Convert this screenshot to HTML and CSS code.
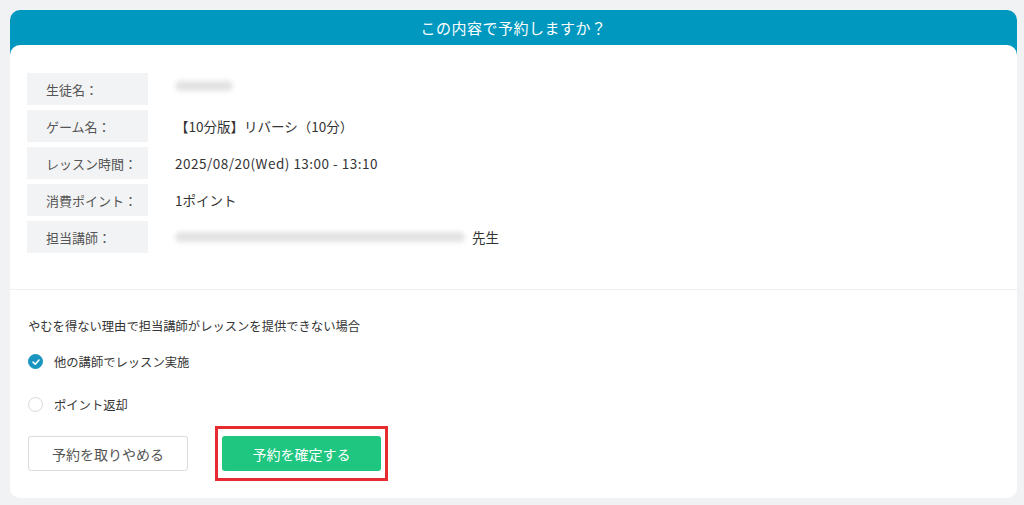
FILE: index.html
```html
<!DOCTYPE html>
<html lang="ja">
<head>
<meta charset="UTF-8" />
<meta name="viewport" content="width=device-width, initial-scale=1" />
<title>予約確認</title>
<link rel="stylesheet" href="styles.css">
</head>
<body>
  <div class="dialog">
    <div class="dialog-head">この内容で予約しますか？</div>
    <div class="dialog-body">
      <div class="details">
        <div class="row">
          <div class="label">生徒名：</div>
          <div class="value"><span class="blur blur-short"></span></div>
        </div>
        <div class="row">
          <div class="label">ゲーム名：</div>
          <div class="value">【10分版】リバーシ（10分）</div>
        </div>
        <div class="row">
          <div class="label">レッスン時間：</div>
          <div class="value num">2025/08/20(Wed) 13:00 - 13:10</div>
        </div>
        <div class="row">
          <div class="label">消費ポイント：</div>
          <div class="value">1ポイント</div>
        </div>
        <div class="row">
          <div class="label">担当講師：</div>
          <div class="value"><span class="blur blur-long"></span>先生</div>
        </div>
      </div>

      <div class="options">
        <p class="note">やむを得ない理由で担当講師がレッスンを提供できない場合</p>
        <label class="radio">
          <span class="radio-mark checked">
            <svg width="10" height="10" viewBox="0 0 10 10"><path d="M2 5.2 L4.2 7.2 L8 3" fill="none" stroke="#fff" stroke-width="1.6" stroke-linecap="round" stroke-linejoin="round"/></svg>
          </span>
          他の講師でレッスン実施
        </label>
        <label class="radio">
          <span class="radio-mark"></span>
          ポイント返却
        </label>
        <div class="actions">
          <button class="btn btn-cancel">予約を取りやめる</button>
          <span class="highlight">
            <button class="btn btn-confirm">予約を確定する</button>
          </span>
        </div>
      </div>
    </div>
  </div>
</body>
</html>
```

FILE: styles.css
```css
/* Reset & base */
* {
  box-sizing: border-box;
}
body {
  margin: 0;
  padding: 10px 7px 0 10px;
  background: #f1f2f4;
  font-family: "Noto Sans CJK JP", "Noto Sans", sans-serif;
  font-size: 13px;
  color: #333;
}
.dialog {
  width: 1007px;
}
.dialog-head {
  background: #0098bf;
  color: #fff;
  text-align: center;
  font-size: 15px;
  line-height: 35px;
  padding-bottom: 10px;
  border-radius: 10px 10px 0 0;
  letter-spacing: 0.5px;
}
.dialog-body {
  background: #fff;
  margin-top: -10px;
  border-radius: 10px;
}
/* Detail rows */
.details {
  padding: 28px 17px 36px;
  border-bottom: 1px solid #f0f0f0;
}
.row {
  display: flex;
  align-items: center;
  height: 32px;
  margin-bottom: 5px;
}
.row:last-child {
  margin-bottom: 0;
}
.label {
  width: 121px;
  height: 100%;
  display: flex;
  align-items: center;
  padding-left: 19px;
  background: #f2f3f4;
  color: #555;
}
.value {
  padding-left: 27px;
  display: flex;
  align-items: center;
  font-size: 13.5px;
  color: #333;
}
.value.num {
  letter-spacing: 0.5px;
}
.blur {
  display: inline-block;
  height: 10px;
  border-radius: 5px;
  background: #e2e2e2;
  filter: blur(2.5px);
}
.blur-short {
  width: 58px;
  margin-top: -6px;
}
.blur-long {
  width: 290px;
  margin-right: 7px;
}
/* Options */
.options {
  padding: 26px 18px 17px;
  font-size: 12.3px;
}
.note {
  margin: 0 0 4px;
  line-height: 20px;
}
.radio {
  display: flex;
  align-items: center;
  gap: 11px;
  height: 43px;
}
.radio-mark {
  width: 15px;
  height: 15px;
  border-radius: 50%;
  border: 1px solid #d8d8d8;
  background: #fff;
  display: flex;
  align-items: center;
  justify-content: center;
}
.radio-mark.checked {
  background: #1a95c0;
  border-color: #1a95c0;
}
.actions {
  display: flex;
  align-items: center;
  gap: 27px;
}
.btn {
  width: 160px;
  height: 35px;
  border-radius: 3px;
  font-family: inherit;
  font-size: 14px;
  cursor: pointer;
}
.btn-cancel {
  background: #fff;
  border: 1px solid #dcdcdc;
  color: #555;
}
.btn-confirm {
  width: 159px;
  background: #1fc67f;
  border: none;
  color: #fff;
}
/* Red annotation frame */
.highlight {
  display: block;
  padding: 7px 4px;
  border: 3px solid #e62c30;
}
.highlight .btn {
  display: block;
}
```
